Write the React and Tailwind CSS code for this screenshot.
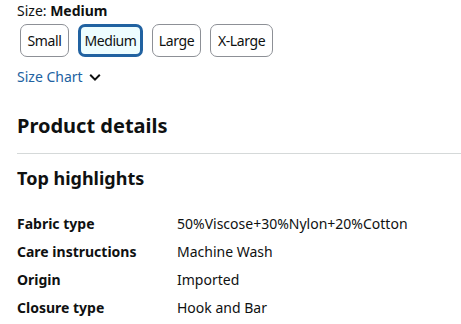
import React from 'react'

const sizes = [
  ['Small', 'w-[49px]'],
  ['Medium', 'w-[65px]'],
  ['Large', 'w-[49px]'],
  ['X-Large', 'w-[63px]'],
]

const details = [
  ['Fabric type', '50%Viscose+30%Nylon+20%Cotton'],
  ['Care instructions', 'Machine Wash'],
  ['Origin', 'Imported'],
  ['Closure type', 'Hook and Bar'],
]

export default function App() {
  return (
    <div className="w-[461px] h-[324px] overflow-hidden bg-white text-[#0f1111] font-['Noto_Sans',sans-serif] pl-[17px]">
      {/* size picker */}
      <div className="pt-[1px] text-[14px] leading-[20px]">
        Size: <span className="font-bold">Medium</span>
      </div>
      <div className="flex gap-[9px] mt-[3px] ml-[3px]">
        {sizes.map(([s, w]) => (
          <button
            key={s}
            className={
              s === 'Medium'
                ? `${w} h-[33px] flex items-center justify-center rounded-[7px] border-[3px] border-[#2162a1] bg-[#edfdff] text-[14px] tracking-[-0.4px]`
                : `${w} h-[33px] flex items-center justify-center rounded-[7px] border border-[#8d9096] bg-white text-[14px] tracking-[-0.4px]`
            }
          >
            {s}
          </button>
        ))}
      </div>
      <div className="flex items-center gap-[6px] mt-[10px] text-[14px] leading-[20px] text-[#2162a1]">
        Size Chart
        <svg width="12" height="9" viewBox="0 0 12 9" fill="none">
          <path d="M1.2 1.8 L6 6.6 L10.8 1.8" stroke="#0f1111" strokeWidth="2" />
        </svg>
      </div>

      {/* product details */}
      <h2 className="mt-[26px] text-[20px] leading-[26px] font-bold">Product details</h2>
      <div className="mt-[14px] h-px bg-[#d5d9d9]" />
      <h3 className="mt-[12px] text-[18px] leading-[24px] font-bold">Top highlights</h3>

      <div className="mt-[20px] flex flex-col text-[14px] leading-[20px]">
        {details.map(([k, v]) => (
          <div key={k} className="flex h-[28px] items-center">
            <div className="w-[160px] font-bold">{k}</div>
            <div>{v}</div>
          </div>
        ))}
      </div>
    </div>
  )
}
